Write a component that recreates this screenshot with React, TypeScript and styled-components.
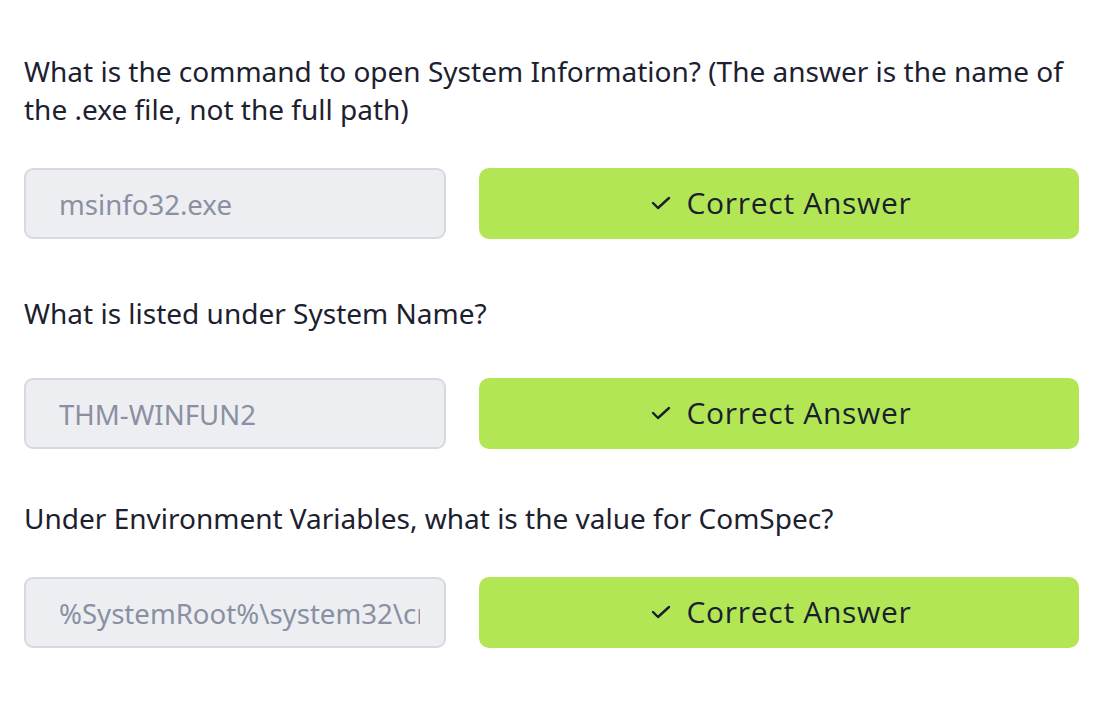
import React from "react";
import styled, { createGlobalStyle } from "styled-components";

const Global = createGlobalStyle`
  html, body { margin: 0; padding: 0; background: #ffffff; }
  body { font-family: "Noto Sans", sans-serif; }
`;

const Page = styled.div`
  width: 1116px;
  box-sizing: border-box;
  padding: 0 37px 0 24px;
  display: flex;
  flex-direction: column;
`;

const Block = styled.div<{ $top: number; $gap: number }>`
  display: flex;
  flex-direction: column;
  gap: ${(p) => p.$gap}px;
  margin-top: ${(p) => p.$top}px;
`;

const Question = styled.p`
  margin: 0;
  font-family: "Noto Sans", sans-serif;
  font-size: 28px;
  line-height: 38px;
  color: #1c2130;
`;

const Row = styled.div`
  display: flex;
  gap: 33px;
  height: 71px;
`;

const AnswerInput = styled.input`
  width: 422px;
  height: 71px;
  box-sizing: border-box;
  flex: none;
  border: 2px solid #d6d9df;
  border-radius: 9px;
  background: #eceef2;
  padding: 0 24px 0 33px;
  font-family: "Noto Sans", sans-serif;
  font-size: 27.6px;
  color: #8a90a1;
  outline: none;
`;

const SubmitButton = styled.button`
  flex: 1;
  height: 71px;
  border: none;
  border-radius: 10px;
  background: #b3e655;
  color: #1a1f2e;
  display: flex;
  align-items: center;
  justify-content: center;
  gap: 16px;
  padding: 0 0 2px 4px;
  font-family: "Open Sans", "Noto Sans", sans-serif;
  font-size: 30px;
  letter-spacing: 0.7px;
  cursor: pointer;
`;

const Check = () => (
  <svg width="20" height="14" viewBox="0 0 20 14" fill="none">
    <path d="M2 7 L7 12 L18 2" stroke="#1a1f2e" strokeWidth="2.4" strokeLinecap="round" strokeLinejoin="round" />
  </svg>
);

const items = [
  {
    q: "What is the command to open System Information? (The answer is the name of the .exe file, not the full path)",
    a: "msinfo32.exe",
    top: 52,
    gap: 40,
  },
  { q: "What is listed under System Name?", a: "THM-WINFUN2", top: 55, gap: 46 },
  { q: "Under Environment Variables, what is the value for ComSpec?", a: "%SystemRoot%\\system32\\cmd.exe", top: 50, gap: 40 },
];

export default function App() {
  return (
    <>
      <Global />
      <Page>
        {items.map((it) => (
          <Block key={it.a} $top={it.top} $gap={it.gap}>
            <Question>{it.q}</Question>
            <Row>
              <AnswerInput readOnly disabled value={it.a} />
              <SubmitButton>
                <Check />
                Correct Answer
              </SubmitButton>
            </Row>
          </Block>
        ))}
      </Page>
    </>
  );
}
